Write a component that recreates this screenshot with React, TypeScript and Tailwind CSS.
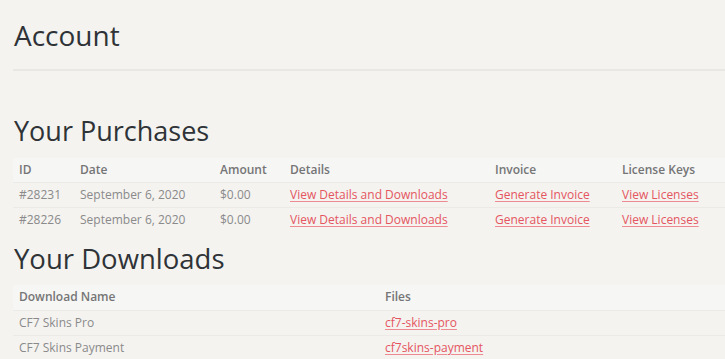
export default function App() {
  const purchases = [
    { id: "#28231", date: "September 6, 2020", amount: "$0.00" },
    { id: "#28226", date: "September 6, 2020", amount: "$0.00" },
  ]
  const downloads = [
    { name: "CF7 Skins Pro", file: "cf7-skins-pro" },
    { name: "CF7 Skins Payment", file: "cf7skins-payment" },
  ]
  const link = "text-[#e5555f] underline decoration-[#ee8a92] underline-offset-2"

  return (
    <div className="h-[359px] w-[725px] overflow-hidden bg-[#f4f3f0] pl-[13px] font-['Open_Sans',sans-serif] text-[12px]">
      <h1 className="pt-[15px] pl-px text-[28px] leading-[40px] text-[#2f3337]">Account</h1>
      <div className="mt-[14px] h-[2px] bg-[#e8e7e4]" />

      <h2 className="mt-[40px] pl-px text-[27px] leading-[40px] text-[#2f3337]">Your Purchases</h2>
      <table className="mt-[7px] w-full border-collapse text-left">
        <thead>
          <tr className="h-[24px] bg-[#f6f6f5] text-[#757575]">
            <th className="w-[67px] pl-[6px] font-semibold">ID</th>
            <th className="w-[140px] font-semibold">Date</th>
            <th className="w-[70px] font-semibold">Amount</th>
            <th className="w-[205px] font-semibold">Details</th>
            <th className="w-[127px] font-semibold">Invoice</th>
            <th className="font-semibold">License Keys</th>
          </tr>
        </thead>
        <tbody className="text-[#8a8a8a]">
          {purchases.map((p) => (
            <tr key={p.id} className="h-[25px] border-t border-[#ebeae7]">
              <td className="pl-[6px]">{p.id}</td>
              <td>{p.date}</td>
              <td>{p.amount}</td>
              <td><a className={link}>View Details and Downloads</a></td>
              <td><a className={link}>Generate Invoice</a></td>
              <td><a className={link}>View Licenses</a></td>
            </tr>
          ))}
        </tbody>
      </table>

      <h2 className="mt-[7px] pl-px text-[27.5px] leading-[40px] text-[#2f3337]">Your Downloads</h2>
      <table className="mt-[6px] w-full border-collapse text-left">
        <thead>
          <tr className="h-[25px] bg-[#f6f6f5] text-[#757575]">
            <th className="w-[372px] pl-[6px] font-semibold">Download Name</th>
            <th className="font-semibold">Files</th>
          </tr>
        </thead>
        <tbody className="text-[#8a8a8a]">
          {downloads.map((d) => (
            <tr key={d.file} className="h-[25px] border-t border-[#ebeae7]">
              <td className="pl-[6px]">{d.name}</td>
              <td><a className={link}>{d.file}</a></td>
            </tr>
          ))}
        </tbody>
      </table>
    </div>
  )
}
